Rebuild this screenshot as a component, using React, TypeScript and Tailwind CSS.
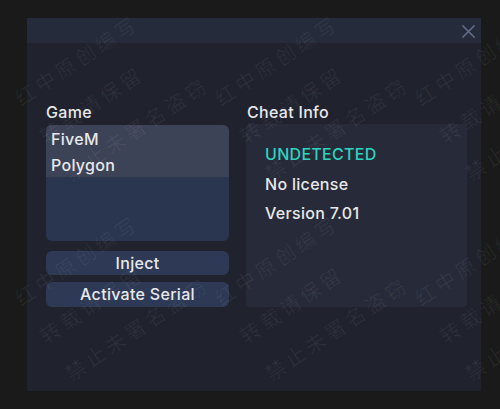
const watermarkCols = [0, 1, 2];
const watermarkRows = [0, 1];

const Watermark = () => (
  <div className="pointer-events-none absolute inset-0 overflow-hidden">
    {watermarkRows.map((r) =>
      watermarkCols.map((c) => (
        <div
          key={`${r}-${c}`}
          className="absolute origin-top-left -rotate-[33.7deg] whitespace-nowrap text-[20px] font-normal leading-[45px] tracking-[4px] text-white/[0.06] font-['Noto_Sans_CJK_SC',sans-serif]"
          style={{ left: 4 + c * 200, top: 81 + r * 200 }}
        >
          <div>红中原创编写</div>
          <div>转载请保留</div>
          <div>禁止未署名盗窃</div>
        </div>
      ))
    )}
  </div>
);

const games = ["FiveM", "Polygon"];

export default function App() {
  return (
    <div className="relative h-[409px] w-[500px] overflow-hidden bg-[#1a1a1a] pt-[18px] pl-[27px] font-['Inter',sans-serif] font-medium text-[16px] tracking-[0.3px] text-[#e8e8ea]">
      <div className="flex h-[373px] w-[454px] flex-col bg-[#20232e]">
        <div className="flex h-[25px] items-center justify-end bg-[#262b3b] pt-[2px] pr-[5px]">
          <svg width="15" height="15" viewBox="0 0 16 16" fill="none" stroke="#5f6a86" strokeWidth="1.6" strokeLinecap="round">
            <path d="M2 2 L14 14 M14 2 L2 14" />
          </svg>
        </div>
        <div className="flex gap-[17px] pt-[59px] pl-[19px] pr-[14px]">
          <div className="flex w-[183px] flex-col">
            <div className="h-[20px] leading-[20px]">Game</div>
            <div className="mt-[3px] h-[116px] overflow-hidden rounded-md bg-[#2a3550]">
              {games.map((g) => (
                <div key={g} className="h-[26px] bg-[#3d4356] pt-[1px] pl-[5px] leading-[26px]">
                  {g}
                </div>
              ))}
            </div>
            <button className="mt-[10px] h-[24px] rounded-md bg-[#2d3955] text-center leading-[24px]">Inject</button>
            <button className="mt-[7px] h-[25px] rounded-md bg-[#2d3955] text-center leading-[25px]">Activate Serial</button>
          </div>
          <div className="flex w-[221px] flex-col">
            <div className="h-[20px] pl-[1px] leading-[20px]">Cheat Info</div>
            <div className="mt-[2px] flex h-[183px] flex-col gap-[9.5px] rounded bg-[#272b39] pt-[20px] pl-[19px]">
              <div className="h-[20px] leading-[20px] text-[#2ed3c0]">UNDETECTED</div>
              <div className="h-[20px] leading-[20px]">No license</div>
              <div className="h-[20px] leading-[20px]">Version 7.01</div>
            </div>
          </div>
        </div>
      </div>
      <Watermark />
    </div>
  );
}
